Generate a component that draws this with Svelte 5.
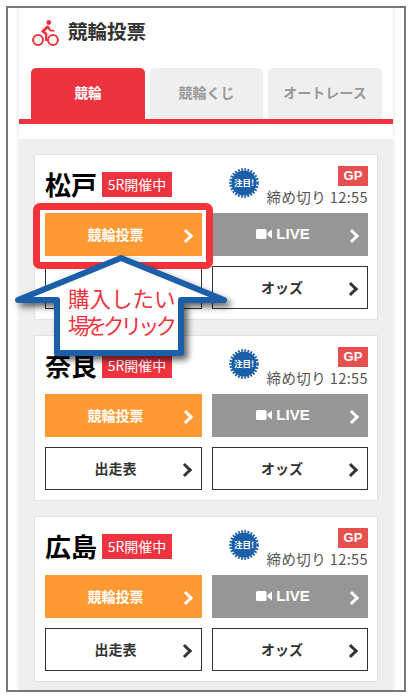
<script>
  const venues = ['松戸', '奈良', '広島'];
</script>

<div class="root">
  <div class="frame">
    <main class="page">
      <header class="head">
        <svg class="bike" viewBox="0 0 30 30" width="29" height="28" aria-hidden="true">
          <circle cx="7" cy="22.5" r="5.3" fill="none" stroke="#ee3340" stroke-width="2.2"/>
          <circle cx="23" cy="22.5" r="5.3" fill="none" stroke="#ee3340" stroke-width="2.2"/>
          <circle cx="18.5" cy="3.8" r="2.6" fill="#ee3340"/>
          <path d="M16.5 7 L10 13 L14.5 17 L14.5 23.5 L17 23.5 L17 15.5 L14.5 13 L17.5 10.5 L20 13.5 L24.5 13.5 L24.5 11.5 L21 11.5 L18.5 7.5 Z" fill="#ee3340"/>
        </svg>
        <h1>競輪投票</h1>
      </header>

      <nav class="tabs">
        <div class="tab active">競輪</div>
        <div class="tab">競輪くじ</div>
        <div class="tab">オートレース</div>
      </nav>
      <div class="rule"></div>

      <section class="list">
        {#each venues as v}
          <article class="card">
            <div class="top">
              <div class="place">
                <span class="name">{v}</span>
                <span class="status">5R開催中</span>
              </div>
              <svg class="seal" viewBox="0 0 30 30" width="30" height="30" aria-label="注目">
                <circle cx="15" cy="15" r="12.6" fill="#1b5fa8"/>
                <circle cx="15" cy="15" r="13.6" fill="none" stroke="#1b5fa8" stroke-width="2.4" stroke-dasharray="1.8 1.4"/>
                <text x="15" y="18" text-anchor="middle">注目!</text>
              </svg>
              <div class="meta">
                <span class="gp">GP</span>
                <span class="deadline">締め切り 12:55</span>
              </div>
            </div>
            <div class="buttons">
              <div class="btn orange">競輪投票<span class="chev"></span></div>
              <div class="btn grey">
                <svg class="cam" viewBox="0 0 16 12" width="16" height="12" aria-hidden="true">
                  <rect x="0" y="1" width="10.5" height="10" rx="1.5" fill="#fff"/>
                  <path d="M11.5 5 L16 1.5 V10.5 L11.5 7 Z" fill="#fff"/>
                </svg>
                LIVE<span class="chev"></span>
              </div>
              <div class="btn outline">出走表<span class="chev"></span></div>
              <div class="btn outline">オッズ<span class="chev"></span></div>
            </div>
          </article>
        {/each}
      </section>
    </main>

    <div class="highlight"></div>
    <div class="callout">
      <svg viewBox="0 0 230 115" width="230" height="115" aria-hidden="true">
        <path class="arrow" d="M105 3 L208 45 H165 V98 H41 V45 H2 Z"/>
      </svg>
      <p>購入したい<br /><span class="tight">場をクリック</span></p>
    </div>
  </div>
</div>

<style>
  :global(body) {
    margin: 0;
    background: #fff;
  }
  .root {
    width: 412px;
    height: 699px;
    padding: 6px 6px 0 6px;
    box-sizing: border-box;
    font-family: "Noto Sans CJK JP", "Noto Sans", sans-serif;
    color: #333;
  }
  .frame {
    position: relative;
    width: 400px;
    height: 686px;
    box-sizing: border-box;
    border: 2px solid #777;
    padding: 0 11px;
    background: #fff;
    overflow: hidden;
  }
  .page {
    height: 100%;
    overflow: hidden;
    box-shadow: 0 0 4px rgba(0, 0, 0, 0.12);
    display: flex;
    flex-direction: column;
  }
  .head {
    display: flex;
    align-items: center;
    gap: 8px;
    height: 60px;
    padding-left: 12px;
    box-sizing: border-box;
    padding-bottom: 14px;
  }
  .bike {
    margin-top: 4px;
  }
  h1 {
    margin: 0;
    font-size: 19.5px;
    font-weight: 700;
    line-height: 1.2;
    color: #333;
  }
  .tabs {
    display: grid;
    grid-template-columns: 114px 113px 114px;
    gap: 5px;
    padding-left: 12px;
    height: 51px;
  }
  .tab {
    display: flex;
    align-items: center;
    justify-content: center;
    border-radius: 5px 5px 0 0;
    background: #f0eff0;
    color: #999;
    font-size: 14px;
    font-weight: 700;
    padding-bottom: 3px;
  }
  .tab.active {
    background: #ee3340;
    color: #fff;
    font-size: 13.5px;
  }
  .rule {
    height: 5px;
    background: #ee3340;
    margin-bottom: 15px;
    flex: none;
  }
  .list {
    flex: 1;
    background: #f0eff0;
    padding: 15px 15px 0;
    display: flex;
    flex-direction: column;
    gap: 15px;
  }
  .card {
    flex: none;
    height: 166px;
    box-sizing: border-box;
    background: #fff;
    border: 1px solid #e2e2e2;
    padding: 0 10px;
  }
  .top {
    position: relative;
    height: 58px;
  }
  .place {
    position: absolute;
    left: 0;
    top: 14px;
    display: flex;
    align-items: center;
    gap: 5px;
  }
  .name {
    font-size: 26px;
    font-weight: 700;
    line-height: 30px;
    color: #000;
  }
  .status {
    background: #ee3340;
    color: #fff;
    font-size: 14px;
    line-height: 25px;
    width: 70px;
    text-align: center;
  }
  .seal {
    position: absolute;
    left: 184px;
    top: 13px;
  }
  .seal text {
    fill: #fff;
    font-size: 8.5px;
    font-weight: 700;
  }
  .meta {
    position: absolute;
    right: -1px;
    top: 11px;
    display: flex;
    flex-direction: column;
    align-items: flex-end;
  }
  .gp {
    background: #e85050;
    color: #fff;
    font-family: "Liberation Sans", sans-serif;
    font-size: 13px;
    font-weight: 700;
    line-height: 20px;
    width: 30px;
    text-align: center;
  }
  .deadline {
    font-size: 14.5px;
    line-height: 22px;
    color: #555;
    white-space: nowrap;
    letter-spacing: 0.4px;
  }
  .buttons {
    display: grid;
    grid-template-columns: 157px 156px;
    grid-auto-rows: 43px;
    column-gap: 10px;
    row-gap: 10px;
  }
  .btn {
    position: relative;
    display: flex;
    align-items: center;
    justify-content: center;
    gap: 4px;
    box-sizing: border-box;
    font-size: 14px;
    font-weight: 700;
    padding-right: 16px;
    padding-bottom: 2px;
  }
  .orange {
    background: #ff9933;
    color: #fff;
  }
  .grey {
    background: #969696;
    color: #fff;
    font-family: "Liberation Sans", sans-serif;
    font-size: 15px;
    padding-right: 14px;
  }
  .outline {
    border: 1px solid #333;
    color: #333;
  }
  .chev {
    position: absolute;
    right: 11px;
    top: 50%;
    width: 7px;
    height: 7px;
    margin-top: -4px;
    border-top: 3px solid currentColor;
    border-right: 3px solid currentColor;
    transform: rotate(45deg);
  }
  .highlight {
    position: absolute;
    left: 25px;
    top: 195px;
    width: 180px;
    height: 66px;
    border: 7px solid #f3333c;
    border-radius: 7px;
    box-sizing: border-box;
  }
  .callout {
    position: absolute;
    left: 8px;
    top: 247px;
    width: 230px;
    height: 115px;
  }
  .callout svg {
    display: block;
    overflow: visible;
    filter: drop-shadow(4px 4px 3px rgba(0, 0, 0, 0.6));
  }
  .arrow {
    fill: #fff;
    stroke: #1b5fa8;
    stroke-width: 6;
    stroke-linejoin: round;
  }
  .callout p {
    position: absolute;
    left: 52px;
    top: 29px;
    margin: 0;
    font-size: 21.5px;
    line-height: 27px;
    color: #ee3340;
    white-space: nowrap;
  }
  .tight {
    letter-spacing: -4px;
  }
</style>
